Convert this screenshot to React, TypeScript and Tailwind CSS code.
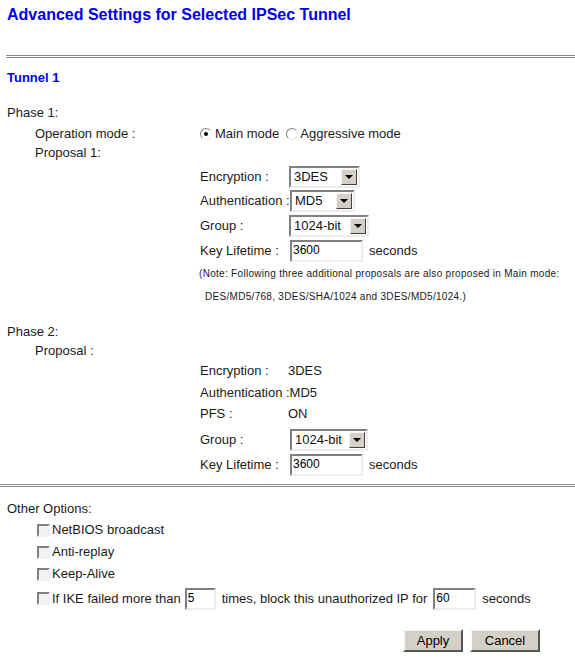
import React from "react";

const font = { fontFamily: '"Liberation Sans", Arial, sans-serif' };

function Select({ value, width }: { value: string; width: string }) {
  return (
    <div
      className={`flex h-[22px] ${width} items-center justify-between border-2 border-t-[#808080] border-l-[#808080] border-b-[#ececec] border-r-[#ececec] bg-white pl-[3px] pr-[1px] text-[13px] text-[#111]`}
    >
      <span>{value}</span>
      <div className="flex h-[16px] w-[16px] items-center justify-center border border-t-[#f4f4f4] border-l-[#f4f4f4] border-b-[#404040] border-r-[#404040] bg-[#d4d0c8]">
        <div className="h-0 w-0 border-x-[4px] border-t-[4px] border-x-transparent border-t-black" />
      </div>
    </div>
  );
}

function TextBox({ value, width }: { value: string; width: string }) {
  return (
    <div
      className={`flex h-[22px] ${width} items-start border-2 border-t-[#808080] border-l-[#808080] border-b-[#ececec] border-r-[#ececec] bg-white pl-[1px] text-[12px] leading-[16px] text-black`}
    >
      {value}
    </div>
  );
}

function Radio({ checked }: { checked?: boolean }) {
  return (
    <div className="flex h-[12px] w-[12px] items-center justify-center rounded-full border border-t-[#808080] border-l-[#808080] border-b-[#e8e8e8] border-r-[#e8e8e8] bg-white">
      {checked && <div className="h-[4px] w-[4px] rounded-full bg-black" />}
    </div>
  );
}

function Checkbox() {
  return (
    <div className="h-[13px] w-[13px] border-2 border-t-[#808080] border-l-[#808080] border-b-[#f0f0f0] border-r-[#f0f0f0] bg-[#f2f2f2]" />
  );
}

function Rule({ inset }: { inset?: boolean }) {
  return (
    <div
      className={`h-[3px] border-y border-y-[#8a8a8a] bg-white ${inset ? "ml-[6px]" : ""}`}
    />
  );
}

function Button({ label, width }: { label: string; width: string }) {
  return (
    <button
      className={`flex h-[23px] ${width} items-center justify-center border-2 border-t-[#f8f8f8] border-l-[#f8f8f8] border-b-[#555] border-r-[#555] bg-[#d4d0c8] text-[13px] text-black`}
    >
      {label}
    </button>
  );
}

export default function App() {
  return (
    <div style={font} className="w-[575px] bg-white text-[13px] text-[#1a1a1a]">
      <div className="flex h-[30px] items-center pl-[7px] text-[16px] font-bold text-[#0000e6]">
        Advanced Settings for Selected IPSec Tunnel
      </div>

      <div className="mt-[25px]">
        <Rule inset />
      </div>

      <div className="mt-[11px] flex h-[18px] items-center pl-[7px] text-[13px] font-bold text-[#0000e6]">
        Tunnel 1
      </div>

      {/* Phase 1 */}
      <div className="mt-[17px] flex h-[18px] items-center pl-[7px]">Phase 1:</div>
      <div className="mt-[3px] flex h-[18px] items-center">
        <div className="w-[200px] pl-[35px]">Operation mode :</div>
        <Radio checked />
        <span className="ml-[3px]">Main mode</span>
        <div className="ml-[7px]">
          <Radio />
        </div>
        <span className="ml-[2px]">Aggressive mode</span>
      </div>
      <div className="mt-[1px] flex h-[18px] items-center pl-[35px]">Proposal 1:</div>

      <div className="mt-[4px] flex h-[22px] items-center">
        <div className="w-[289px] pl-[200px]">Encryption :</div>
        <Select value="3DES" width="w-[71px]" />
      </div>
      <div className="mt-[2px] flex h-[22px] items-center">
        <div className="w-[290px] pl-[200px]">Authentication :</div>
        <Select value="MD5" width="w-[65px]" />
      </div>
      <div className="mt-[3px] flex h-[22px] items-center">
        <div className="w-[289px] pl-[200px]">Group :</div>
        <Select value="1024-bit" width="w-[80px]" />
      </div>
      <div className="mt-[3px] flex h-[22px] items-center">
        <div className="w-[290px] pl-[200px]">Key Lifetime :</div>
        <TextBox value="3600" width="w-[73px]" />
        <span className="ml-[6px]">seconds</span>
      </div>
      <div className="mt-[3px] flex h-[16px] items-center pl-[199px] text-[10px] tracking-[0.3px]">
        (Note: Following three additional proposals are also proposed in Main mode:
      </div>
      <div className="mt-[7px] flex h-[16px] items-center pl-[205px] text-[10px] tracking-[0.3px]">
        DES/MD5/768, 3DES/SHA/1024 and 3DES/MD5/1024.)
      </div>

      {/* Phase 2 */}
      <div className="mt-[19px] flex h-[18px] items-center pl-[7px]">Phase 2:</div>
      <div className="mt-[1px] flex h-[18px] items-center pl-[35px]">Proposal :</div>
      <div className="mt-[2px] flex h-[18px] items-center">
        <div className="w-[288px] pl-[200px]">Encryption :</div>
        <span>3DES</span>
      </div>
      <div className="mt-[4px] flex h-[18px] items-center pl-[200px]">Authentication :MD5</div>
      <div className="mt-[3px] flex h-[18px] items-center">
        <div className="w-[288px] pl-[200px]">PFS :</div>
        <span>ON</span>
      </div>
      <div className="mt-[6px] flex h-[22px] items-center">
        <div className="w-[290px] pl-[200px]">Group :</div>
        <Select value="1024-bit" width="w-[78px]" />
      </div>
      <div className="mt-[3px] flex h-[22px] items-center">
        <div className="w-[290px] pl-[200px]">Key Lifetime :</div>
        <TextBox value="3600" width="w-[73px]" />
        <span className="ml-[6px]">seconds</span>
      </div>

      <div className="mt-[8px]">
        <Rule />
      </div>

      {/* Other options */}
      <div className="mt-[13px] flex h-[18px] items-center pl-[7px]">Other Options:</div>
      <div className="mt-[3px] flex h-[18px] items-center gap-[2px] pl-[37px]">
        <Checkbox />
        <span>NetBIOS broadcast</span>
      </div>
      <div className="mt-[4px] flex h-[18px] items-center gap-[2px] pl-[37px]">
        <Checkbox />
        <span>Anti-replay</span>
      </div>
      <div className="mt-[4px] flex h-[18px] items-center gap-[2px] pl-[37px]">
        <Checkbox />
        <span>Keep-Alive</span>
      </div>
      <div className="mt-[4px] flex h-[23px] items-center pl-[37px]">
        <Checkbox />
        <span className="ml-[2px]">If IKE failed more than</span>
        <div className="ml-[4px]">
          <TextBox value="5" width="w-[31px]" />
        </div>
        <span className="ml-[6px]">times, block this unauthorized IP for</span>
        <div className="ml-[6px]">
          <TextBox value="60" width="w-[43px]" />
        </div>
        <span className="ml-[6px]">seconds</span>
      </div>

      <div className="mt-[19px] flex h-[23px] gap-[7px] pb-[19px] pl-[403px]">
        <Button label="Apply" width="w-[60px]" />
        <Button label="Cancel" width="w-[70px]" />
      </div>
    </div>
  );
}
